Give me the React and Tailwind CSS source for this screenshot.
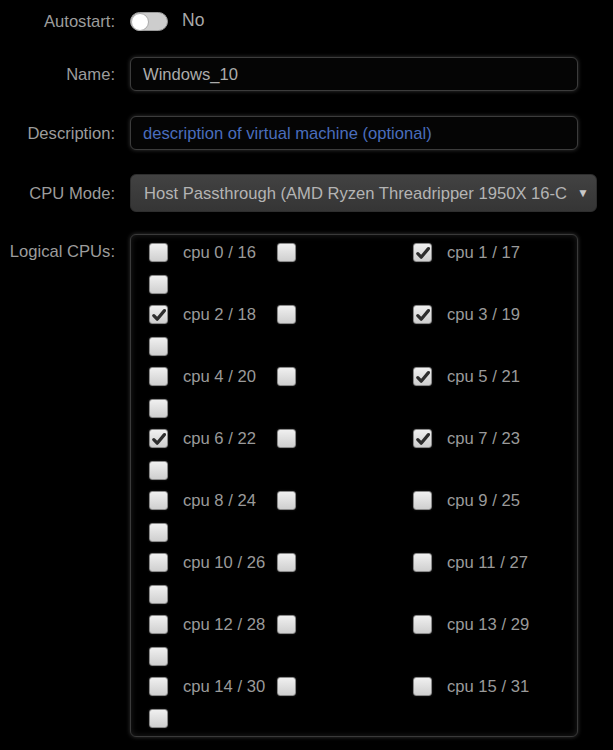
import React from "react";

const font = { fontFamily: '"Liberation Sans", Arial, sans-serif' };

function Box({ checked }) {
  return (
    <span className="inline-flex h-[19px] w-[19px] shrink-0 items-center justify-center rounded-[3px] border border-[#8a8a8a] bg-gradient-to-b from-[#f0f0f0] to-[#cfcfcf] shadow-[0_0_2px_rgba(255,255,255,0.15)]">
      {checked && (
        <svg width="14" height="14" viewBox="0 0 14 14">
          <path d="M1.8 7.6 L5.2 11.2 L12.4 2.6" fill="none" stroke="#2e2e2e" strokeWidth="3.2" strokeLinecap="round" strokeLinejoin="round" />
        </svg>
      )}
    </span>
  );
}

const rows = [
  [[0, 16, false], [1, 17, true]],
  [[2, 18, true], [3, 19, true]],
  [[4, 20, false], [5, 21, true]],
  [[6, 22, true], [7, 23, true]],
  [[8, 24, false], [9, 25, false]],
  [[10, 26, false], [11, 27, false]],
  [[12, 28, false], [13, 29, false]],
  [[14, 30, false], [15, 31, false]],
];

function Label({ children, top }) {
  return (
    <div className={`w-[115px] shrink-0 text-right text-[#9c9c9c] ${top ? "pt-[8px] self-start" : ""}`}>
      {children}
    </div>
  );
}

export default function App() {
  return (
    <div className="min-h-screen w-full bg-black text-[16.6px] leading-[19px]" style={font}>
      <div className="flex flex-col">
        <div className="flex h-[41px] items-center gap-[15px] pt-[1px]">
          <Label>Autostart:</Label>
          <div className="flex items-center gap-[14px]">
            <div className="relative mt-[1px] h-[19px] w-[38px] rounded-full border border-[#9a9a9a] bg-[#cdcdcd]">
              <div className="absolute left-0 top-[-0.5px] h-[18px] w-[18px] rounded-full border border-[#aaa] bg-white" />
            </div>
            <span className="-mt-[2px] text-[17.5px] text-[#a8a8a8]">No</span>
          </div>
        </div>

        <div className="mt-[16px] flex items-center gap-[15px]">
          <Label>Name:</Label>
          <div className="flex h-[34px] w-[448px] items-center rounded-[6px] border border-[#3c3c3c] bg-[#050505] px-[12px] text-[#ababab] shadow-[0_0_4px_rgba(120,120,120,0.45)]">
            Windows_10
          </div>
        </div>

        <div className="mt-[25px] flex items-center gap-[15px]">
          <Label>Description:</Label>
          <div className="flex h-[34px] w-[448px] items-center rounded-[6px] border border-[#3c3c3c] bg-[#050505] px-[12px] text-[#4a6dbd] shadow-[0_0_4px_rgba(120,120,120,0.45)]">
            description of virtual machine (optional)
          </div>
        </div>

        <div className="mt-[24px] flex items-center gap-[15px]">
          <Label>CPU Mode:</Label>
          <div className="flex h-[38px] w-[467px] items-center justify-between overflow-hidden rounded-[6px] border border-[#2e2e2e] bg-gradient-to-b from-[#424242] to-[#353535] pl-[13px] pr-[7px] text-[#b4b4b4]">
            <span className="w-[423px] overflow-hidden whitespace-nowrap">Host Passthrough (AMD Ryzen Threadripper 1950X 16-Core Processor)</span>
            <span className="text-[12px] text-[#c8c8c8]">▼</span>
          </div>
        </div>

        <div className="mt-[22px] flex gap-[15px]">
          <Label top>Logical CPUs:</Label>
          <div className="w-[448px] rounded-[6px] border border-[#3a3a3a] bg-black px-[18px] pt-[8px] pb-[8px] shadow-[0_0_4px_rgba(120,120,120,0.45),inset_0_0_6px_rgba(90,90,90,0.35)]">
            <div className="flex flex-col gap-[11px]">
              {rows.map(([l, r], i) => (
                <div key={i} className="grid grid-cols-[264px_1fr] text-[#9a9a9a]">
                  <div className="flex flex-col">
                    <div className="flex h-[32px] items-start">
                      <Box checked={l[2]} />
                      <span className="ml-[15px] w-[94px] whitespace-nowrap">{`cpu ${l[0]} / ${l[1]}`}</span>
                      <Box />
                    </div>
                    <div className="flex h-[19px]">
                      <Box />
                    </div>
                  </div>
                  <div className="flex h-[32px] items-start">
                    <Box checked={r[2]} />
                    <span className="ml-[15px] whitespace-nowrap">{`cpu ${r[0]} / ${r[1]}`}</span>
                  </div>
                </div>
              ))}
            </div>
          </div>
        </div>
      </div>
    </div>
  );
}
